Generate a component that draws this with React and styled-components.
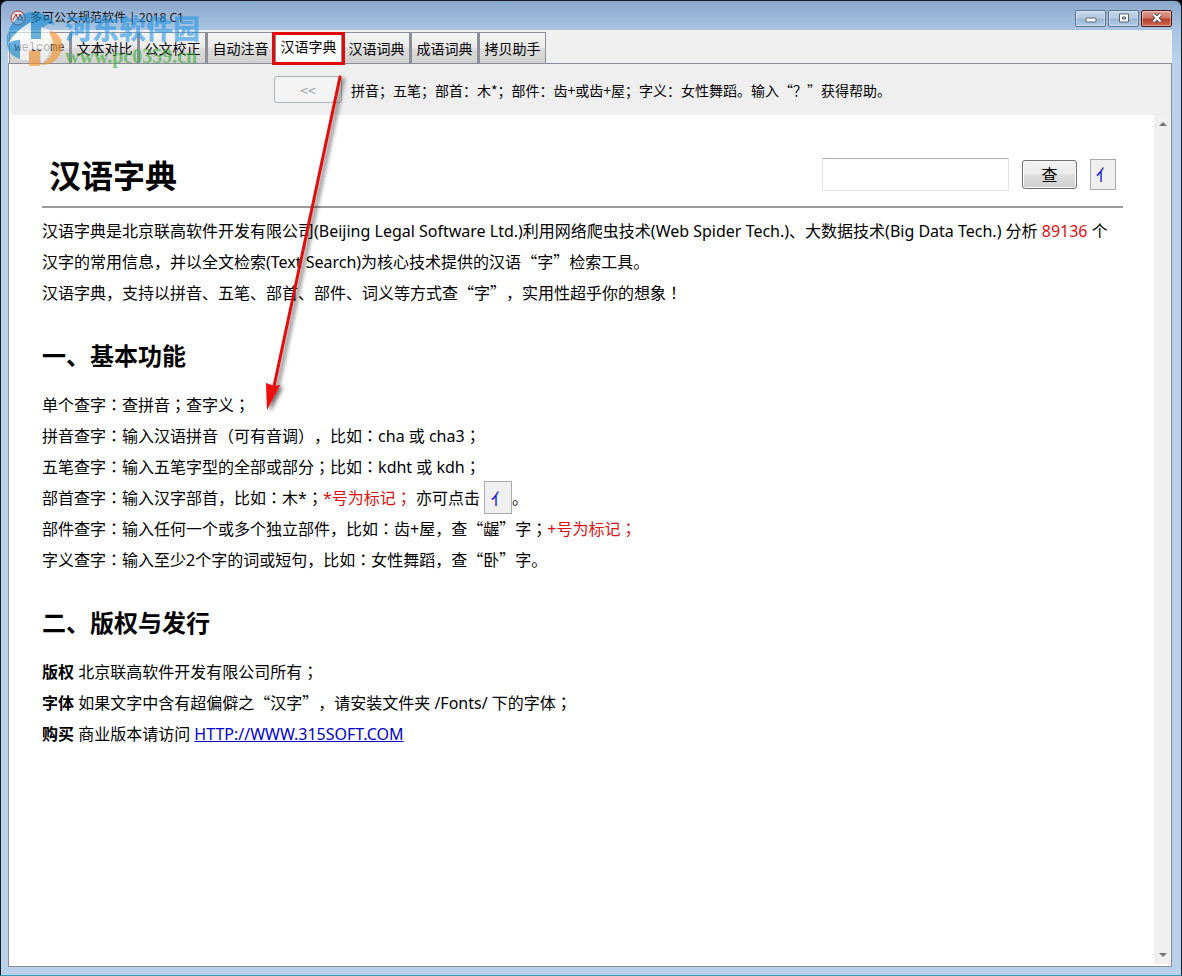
import React from 'react';
import styled, { createGlobalStyle, css } from 'styled-components';

const Global = createGlobalStyle`
  * { box-sizing: border-box; }
  body { margin: 0; background: #000; }
`;

const uiFont = '"Noto Sans CJK SC", sans-serif';
const textFont = '"Noto Sans", "Noto Sans CJK SC", sans-serif';

const Window = styled.div`
  position: relative;
  min-height: 100vh;
  display: flex;
  flex-direction: column;
  padding: 1px 9px 8px 7px;
  border: 1px solid #16202c;
  border-bottom-color: #2c9db5;
  border-radius: 7px 7px 0 0;
  background: linear-gradient(#8aa8cc 0, #a9c4e2 28px, #b9d1ea 60px, #b9d1ea 100%);
  font-family: ${textFont};
  color: #000;
`;

const TitleBar = styled.header`
  height: 28px;
  display: flex;
  align-items: center;
  gap: 4px;
  padding-left: 2px;
  padding-top: 4px;
`;

const Title = styled.span`
  flex: 1;
  font: 12px/16px "Open Sans", "Noto Sans CJK SC", sans-serif;
  color: #111;
`;

const WindowButtons = styled.div`
  display: flex;
  gap: 2px;
`;

const WindowButton = styled.button`
  width: 31px;
  height: 17px;
  padding: 0;
  display: flex;
  align-items: center;
  justify-content: center;
  border: 1px solid ${p => (p.$close ? '#4a1512' : '#5b7391')};
  border-radius: 2px;
  background: ${p => (p.$close
    ? 'linear-gradient(#dfa195 0, #cf7566 48%, #b83c2c 52%, #cd6a52 100%)'
    : 'linear-gradient(#c3d6ea 0, #b5cbe4 48%, #98b4d2 52%, #b3cce6 100%)')};
  box-shadow: inset 0 0 0 1px rgba(255, 255, 255, 0.4);
`;

const Client = styled.div`
  flex: 1;
  display: flex;
  flex-direction: column;
  background: #f0f0f0;
`;

const Tabs = styled.nav`
  display: flex;
  align-items: flex-end;
  height: 33px;
  padding-left: 1px;
`;

const Tab = styled.button`
  position: relative;
  height: 31px;
  width: ${p => p.$width || 68}px;
  padding: 0;
  border: 1px solid #8d8f98;
  border-left-width: ${p => (p.$mono ? 1 : 2)}px;
  border-bottom: 0;
  background: linear-gradient(#f3f3f3, #ebebeb 48%, #dcdcdc 52%, #d0d0d0);
  font: 14px/20px ${p => (p.$mono ? '"Liberation Mono", monospace' : uiFont)};
  font-size: ${p => (p.$mono ? 12 : 14)}px;
  color: ${p => (p.$mono ? '#333' : '#000')};
  white-space: nowrap;
  ${p => p.$active && css`
    background: #fff;
    padding-bottom: 4px;
    z-index: 1;
  `}
`;

const Highlight = styled.span`
  position: absolute;
  inset: -1px -4px -2px -4px;
  border: 3px solid #e10b0b;
  pointer-events: none;
`;

const Panel = styled.main`
  flex: 1;
  display: flex;
  flex-direction: column;
  border: 1px solid #8b8e99;
  background: #fff;
  padding: 0 0 2px 2px;
`;

const Toolbar = styled.div`
  display: flex;
  align-items: center;
  height: 51px;
  padding-left: 263px;
  gap: 9px;
  background: #efefef;
`;

const BackButton = styled.button`
  width: 68px;
  height: 27px;
  border: 1px solid #adb2b5;
  border-radius: 3px;
  background: #f4f4f4;
  color: #9a9a9a;
  font: 14px/20px ${uiFont};
`;

const Hint = styled.span`
  font: 14px/20px ${uiFont};
  text-spacing-trim: space-all;
  white-space: nowrap;
`;

const Viewport = styled.div`
  flex: 1;
  display: flex;
`;

const Page = styled.article`
  flex: 1;
  min-width: 0;
  padding: 31px 31px 0;
  font: 16px/31px ${textFont};
  text-spacing-trim: space-all;
`;

const Scrollbar = styled.div`
  width: 17px;
  display: flex;
  flex-direction: column;
  justify-content: space-between;
  align-items: center;
  padding: 6px 0;
  background: #f0f0f0;
`;

const PageHead = styled.form`
  display: flex;
  align-items: center;
  height: 62px;
  padding: 0 7px 4px;
  border-bottom: 2px solid #999;
  margin-bottom: 8px;
`;

const PageTitle = styled.h1`
  flex: 1;
  margin: 0;
  font: bold 32px/40px ${uiFont};
`;

const SearchInput = styled.input`
  width: 187px;
  height: 33px;
  border: 1px solid #e3e3e6;
  border-top-color: #abadb3;
  background: #fff;
  font: 16px/24px ${textFont};
`;

const SearchButton = styled.button`
  width: 55px;
  height: 29px;
  margin: 0 13px;
  padding: 0;
  border: 1px solid #707070;
  border-radius: 3px;
  background: linear-gradient(#f2f2f2, #ebebeb 48%, #dddddd 52%, #cfcfcf);
  box-shadow: inset 0 0 0 1px #fafafa;
  font: 16px/24px ${uiFont};
`;

const RadicalButton = styled.button`
  width: ${p => (p.$inline ? 28 : 26)}px;
  height: ${p => (p.$inline ? 33 : 31)}px;
  padding: 0 0 0 2px;
  border: 1px solid #aaa;
  background: #efefef;
  color: #00c;
  font: 16px/24px ${uiFont};
  vertical-align: middle;
  margin: ${p => (p.$inline ? '-8px 0 -4px' : 0)};
`;

const Paragraph = styled.p`
  margin: 0;
`;

const SectionTitle = styled.h2`
  margin: 0;
  padding: 29px 0 18px;
  font: bold 24px/34px ${uiFont};
`;

const Red = styled.span`
  color: #e01010;
`;

const Quote = styled.span`
  font-family: "Noto Sans CJK SC", sans-serif;
  line-height: 0;
`;

const Centered = styled.span`
  font-family: "Noto Sans CJK JP", sans-serif;
  line-height: 0;
`;

const SiteLink = styled.a`
  color: #00c;
`;

const Arrow = styled.svg`
  position: absolute;
  left: 254px;
  top: 68px;
  pointer-events: none;
`;

const Watermark = styled.div`
  position: absolute;
  left: 3px;
  top: 8px;
  display: flex;
  gap: 1px;
  pointer-events: none;
  white-space: nowrap;
`;

const WatermarkName = styled.div`
  font: 900 27px/30px "Noto Sans CJK SC", sans-serif;
  color: rgba(36, 150, 230, 0.6);
  padding-top: 4px;
`;

const WatermarkSite = styled.div`
  font: bold 20px/22px "Liberation Serif", serif;
  color: rgba(60, 175, 60, 0.65);
  padding-top: 2px;
`;

/* Full-width punctuation: quotes keep a full em, colons sit mid-cell. */
const zh = text => text.split(/([“”]+|[：；！]+)/).map((part, i) => {
  if (/^[“”]/.test(part)) return <Quote key={i}>{part}</Quote>;
  if (/^[：；！]/.test(part)) return <Centered key={i}>{part}</Centered>;
  return part;
});

const tabs = [
  { label: 'welcome', width: 61, mono: true },
  { label: '文本对比' },
  { label: '公文校正' },
  { label: '自动注音' },
  { label: '汉语字典', active: true },
  { label: '汉语词典' },
  { label: '成语词典' },
  { label: '拷贝助手' },
];

export default function App() {
  return (
    <>
      <Global />
      <Window>
        <TitleBar>
          <svg width="16" height="16" viewBox="0 0 16 16" fill="none">
            <circle cx="8" cy="8" r="7" fill="#f4e4e4" stroke="#b03030" />
            <path d="M3 10 6 4l2 6 2-6 3 7M9 11l4-4" stroke="#a02020" />
          </svg>
          <Title>多可公文规范软件 | 2018 C1</Title>
          <WindowButtons>
            <WindowButton aria-label="最小化">
              <svg width="12" height="10" viewBox="0 0 12 10"><rect x="1" y="5" width="10" height="4" rx="1" fill="#fff" stroke="#56616e" /></svg>
            </WindowButton>
            <WindowButton aria-label="最大化">
              <svg width="12" height="10" viewBox="0 0 12 10"><path fillRule="evenodd" d="M1.5 1h9v8h-9zM4.500 4h3v2h-3z" fill="#fff" stroke="#56616e" /></svg>
            </WindowButton>
            <WindowButton $close aria-label="关闭">
              <svg width="12" height="10" viewBox="0 0 12 10"><path d="m2.500 1.500 7 7m0-7-7 7" stroke="#56484a" strokeWidth="4" /><path d="m2.500 1.500 7 7m0-7-7 7" stroke="#fff" strokeWidth="2.200" /></svg>
            </WindowButton>
          </WindowButtons>
        </TitleBar>
        <Client>
          <Tabs>
            {tabs.map(t => (
              <Tab key={t.label} $width={t.width} $mono={t.mono} $active={t.active}>
                {t.label}
                {t.active && <Highlight />}
              </Tab>
            ))}
          </Tabs>
          <Panel>
            <Toolbar>
              <BackButton disabled>&lt;&lt;</BackButton>
              <Hint>拼音；五笔；部首：木*；部件：齿+或齿+屋；字义：女性舞蹈。输入“？”获得帮助。</Hint>
            </Toolbar>
            <Viewport>
              <Page>
                <PageHead onSubmit={e => e.preventDefault()}>
                  <PageTitle>汉语字典</PageTitle>
                  <SearchInput aria-label="查字" />
                  <SearchButton>查</SearchButton>
                  <RadicalButton type="button">亻</RadicalButton>
                </PageHead>
                <Paragraph>{zh('汉语字典是北京联高软件开发有限公司(Beijing Legal Software Ltd.)利用网络爬虫技术(Web Spider Tech.)、大数据技术(Big Data Tech.) 分析 ')}<Red>89136</Red>{zh(' 个汉字的常用信息，并以全文检索(Text Search)为核心技术提供的汉语“字”检索工具。')}</Paragraph>
                <Paragraph>{zh('汉语字典，支持以拼音、五笔、部首、部件、词义等方式查“字”，实用性超乎你的想象！')}</Paragraph>
                <SectionTitle>一、基本功能</SectionTitle>
                <Paragraph>{zh('单个查字：查拼音；查字义；')}</Paragraph>
                <Paragraph>{zh('拼音查字：输入汉语拼音（可有音调），比如：cha 或 cha3；')}</Paragraph>
                <Paragraph>{zh('五笔查字：输入五笔字型的全部或部分；比如：kdht 或 kdh；')}</Paragraph>
                <Paragraph>{zh('部首查字：输入汉字部首，比如：木*；')}<Red>{zh('*号为标记；')}</Red> 亦可点击 <RadicalButton type="button" $inline>亻</RadicalButton>。</Paragraph>
                <Paragraph>{zh('部件查字：输入任何一个或多个独立部件，比如：齿+屋，查“龌”字；')}<Red>{zh('+号为标记；')}</Red></Paragraph>
                <Paragraph>{zh('字义查字：输入至少2个字的词或短句，比如：女性舞蹈，查“卧”字。')}</Paragraph>
                <SectionTitle>二、版权与发行</SectionTitle>
                <Paragraph><b>版权</b> {zh('北京联高软件开发有限公司所有；')}</Paragraph>
                <Paragraph><b>字体</b> {zh('如果文字中含有超偏僻之“汉字”，请安装文件夹 /Fonts/ 下的字体；')}</Paragraph>
                <Paragraph><b>购买</b> 商业版本请访问 <SiteLink href="http://www.315soft.com">HTTP://WWW.315SOFT.COM</SiteLink></Paragraph>
              </Page>
              <Scrollbar>
                <svg width="8" height="6" viewBox="0 0 8 6"><path d="M0 5 4 1l4 4z" fill="#777" /></svg>
                <svg width="8" height="6" viewBox="0 0 8 6"><path d="M0 1l4 4 4-4z" fill="#777" /></svg>
              </Scrollbar>
            </Viewport>
          </Panel>
        </Client>
        <Watermark>
          <svg width="60" height="60" viewBox="0 0 60 60">
            <g opacity="0.62">
              <path d="M4 40C-1 24 10 3 29 3c11 0 19 6 22 13-6-2-9-1-13 4v12H27V22L16 32v18C10 48 6 45 4 40Z" fill="#1689d0" />
              <path d="M42 21c11 0 17 9 16 17-1 11-9 18-21 18 9-6 12-12 12-20 0-6-2-11-7-15Z" fill="#f5922a" />
              <path d="M25 42h11v15H25Z" fill="#f5922a" />
              <path d="M4 35C9 25 18 18 27 13v17h10V18l9 3v17c0 6-3 12-9 16V40H25v11h-9V31c-5 0-9 1-12 4Z" fill="#fff" />
            </g>
          </svg>
          <div>
            <WatermarkName>河东软件园</WatermarkName>
            <WatermarkSite>www.pc0359.cn</WatermarkSite>
          </div>
        </Watermark>
        <Arrow width="100" height="350" viewBox="0 0 100 350">
          <defs>
            <filter id="arrowShadow" x="-20%" y="-5%" width="150%" height="110%">
              <feDropShadow dx="3" dy="2" stdDeviation="2" floodColor="#000" floodOpacity="0.6" />
            </filter>
          </defs>
          <g filter="url(#arrowShadow)">
            <path d="M85 8 18 322" stroke="#e01010" strokeWidth="3" strokeLinecap="round" />
            <path d="m11 314 1 27 13-25-6 1z" fill="#f00808" />
          </g>
        </Arrow>
      </Window>
    </>
  );
}
